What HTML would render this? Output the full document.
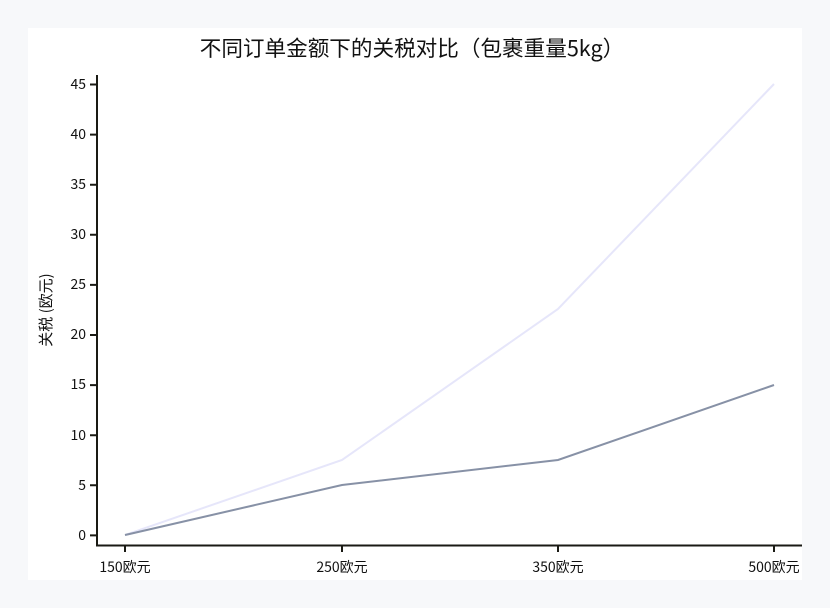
<!DOCTYPE html>
<html><head><meta charset="utf-8"><style>
html,body{margin:0;padding:0;background:#f7f8fa;width:830px;height:608px;overflow:hidden}
svg{display:block}
text{font-family:"Noto Sans CJK SC","DejaVu Sans",sans-serif;fill:#111}
</style></head><body>
<svg width="830" height="608" viewBox="0 0 830 608">
<rect x="0" y="0" width="830" height="608" fill="#f7f8fa"/>
<rect x="28" y="28" width="774" height="552" fill="#fff"/>
<text x="412" y="56" font-size="21.6" text-anchor="middle">不同订单金额下的关税对比（包裹重量5kg）</text>
<text transform="translate(51,310) rotate(-90)" font-size="15" text-anchor="middle">关税 (欧元)</text>
<g stroke="#1a1a14" stroke-width="2" fill="none">
<path d="M97 75V545.5H802"/>
<path d="M90 84.5h7M90 134.6h7M90 184.7h7M90 234.8h7M90 284.9h7M90 335h7M90 385.1h7M90 435.2h7M90 485.3h7M90 535.4h7"/>
<path d="M125 545v7M342 545v7M558 545v7M774 545v7"/>
</g>
<g font-size="14" text-anchor="end">
<text x="86" y="89">45</text><text x="86" y="139">40</text><text x="86" y="189">35</text><text x="86" y="239">30</text><text x="86" y="289">25</text><text x="86" y="339">20</text><text x="86" y="389">15</text><text x="86" y="440">10</text><text x="86" y="490">5</text><text x="86" y="540">0</text>
</g>
<g font-size="14" text-anchor="middle">
<text x="125" y="572">150欧元</text><text x="342" y="572">250欧元</text><text x="558" y="572">350欧元</text><text x="774" y="572">500欧元</text>
</g>
<polyline points="125,535 342,460 558,309 774,84" fill="none" stroke="#e6e6fa" stroke-width="2"/>
<polyline points="125,535 342,485 558,460 774,385" fill="none" stroke="#8791a6" stroke-width="2"/>
</svg>
</body></html>
